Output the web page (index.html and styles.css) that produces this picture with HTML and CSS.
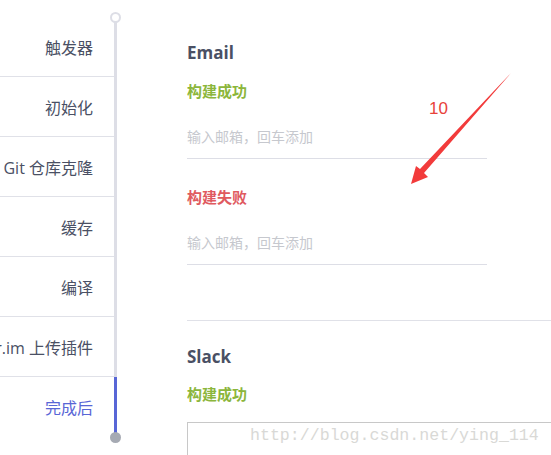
FILE: index.html
```html
<!DOCTYPE html>
<html lang="en">

<head>
  <meta charset="UTF-8">
  <title>构建通知</title>
  <link rel="stylesheet" href="styles.css">
</head>

<body>
  <div class="page">
    <!-- Steps sidebar -->
    <ul class="steps">
      <li class="step">触发器</li>
      <li class="step">初始化</li>
      <li class="step">Git 仓库克隆</li>
      <li class="step">缓存</li>
      <li class="step">编译</li>
      <li class="step">fir.im 上传插件</li>
      <li class="step active">完成后</li>
    </ul>

    <div class="track">
      <span class="track-start"></span>
      <span class="track-active"></span>
      <span class="track-end"></span>
    </div>

    <!-- Notification settings -->
    <div class="content">
      <section class="notify">
        <h3>Email</h3>
        <div class="label success">构建成功</div>
        <input class="mail-input" type="text" placeholder="输入邮箱，回车添加">
        <div class="label failed">构建失败</div>
        <input class="mail-input" type="text" placeholder="输入邮箱，回车添加">
      </section>

      <section class="notify">
        <h3>Slack</h3>
        <div class="label success">构建成功</div>
        <div class="hook-box"></div>
      </section>
    </div>
  </div>

  <!-- annotation overlay -->
  <svg class="arrow" width="551" height="455" viewBox="0 0 551 455">
    <polygon points="511,73 424,173 428,177 411,184 416,166 420,169" fill="#f23b3b" />
  </svg>
  <span class="note">10</span>
  <span class="watermark">http://blog.csdn.net/ying_114</span>
</body>

</html>
```

FILE: styles.css
```css
/* General Styles */
body {
  margin: 0;
  background: #ffffff;
  font-family: 'Open Sans', 'Noto Sans CJK SC', sans-serif;
  color: #4a5064;
  overflow: hidden;
}

.page {
  display: flex;
  height: 455px;
  overflow: hidden;
}

/* Steps sidebar */
.steps {
  list-style: none;
  margin: 17px 0 0;
  padding: 0;
  width: 114px;
  flex-shrink: 0;
}

.step {
  display: flex;
  justify-content: flex-end;
  align-items: center;
  height: 59px;
  padding-right: 21px;
  border-bottom: 1px solid #e0e1e8;
  font-size: 16px;
  white-space: nowrap;
}

.step.active {
  border-bottom: none;
  color: #5866d6;
}

/* Timeline track */
.track {
  position: relative;
  width: 3px;
  margin-top: 21px;
  height: 416px;
  background: #dddee6;
  display: flex;
  flex-direction: column;
  justify-content: flex-end;
}

.track-active {
  height: 56px;
  margin-bottom: 4px;
  background: #5866d6;
}

.track-start {
  position: absolute;
  top: -9px;
  left: -4px;
  width: 7px;
  height: 7px;
  border: 2px solid #dddee6;
  border-radius: 50%;
  background: #ffffff;
}

.track-end {
  position: absolute;
  bottom: -6px;
  left: -4px;
  width: 11px;
  height: 11px;
  border-radius: 50%;
  background: #a6aab3;
}

/* Content */
.content {
  flex: 1;
  margin-left: 70px;
  padding-top: 18px;
}

.notify {
  padding-top: 23px;
  padding-bottom: 55px;
  border-bottom: 1px solid #e0e1e8;
}

.notify + .notify {
  padding-top: 24px;
}

.notify:last-child {
  border-bottom: none;
  padding-bottom: 0;
}

.notify:last-child .label {
  margin-top: 15px;
}

h3 {
  margin: 0;
  font-size: 17px;
  line-height: 24px;
  font-weight: 700;
  color: #4a5064;
}

.label {
  margin-top: 16px;
  font-size: 15px;
  line-height: 20px;
  font-weight: 700;
}

.label.success {
  color: #8cb63c;
}

.label.failed {
  color: #e05a5f;
  margin-top: 28px;
}

.mail-input {
  display: block;
  box-sizing: border-box;
  width: 300px;
  height: 41px;
  margin-top: 17px;
  padding: 0 0 4px;
  border: none;
  border-bottom: 1px solid #dddee6;
  font-family: 'Open Sans', 'Noto Sans CJK SC', sans-serif;
  font-size: 14px;
  outline: none;
}

.mail-input::placeholder {
  color: #c6c8ce;
}

.hook-box {
  margin-top: 18px;
  height: 40px;
  border: 1px solid #c8c8c8;
  border-right: none;
}

/* Annotation overlay */
.arrow {
  position: absolute;
  top: 0;
  left: 0;
  pointer-events: none;
}

.note {
  position: absolute;
  left: 429px;
  top: 99px;
  font-family: 'Liberation Sans', sans-serif;
  font-size: 17px;
  color: #e8423a;
}

.watermark {
  position: absolute;
  left: 250px;
  top: 426px;
  font-family: 'Liberation Mono', monospace;
  font-size: 16.6px;
  line-height: 20px;
  color: #d9d9d6;
}
```
